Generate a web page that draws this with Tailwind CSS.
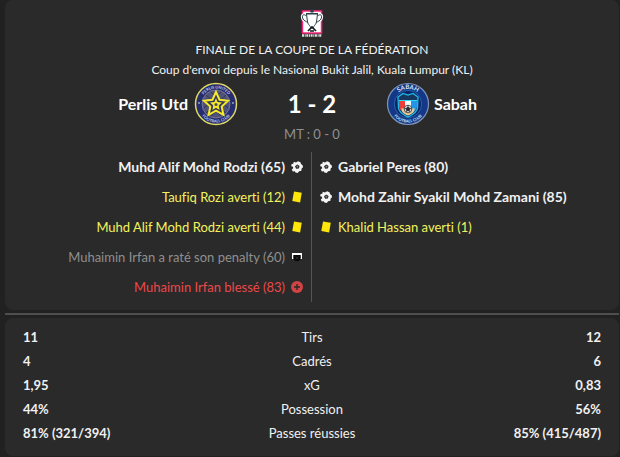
<!DOCTYPE html>
<html lang="fr">
<head>
  <meta charset="UTF-8" />
  <meta name="viewport" content="width=device-width, initial-scale=1.0" />
  <title>Perlis Utd 1 - 2 Sabah</title>
  <script src="https://cdn.jsdelivr.net/npm/@tailwindcss/browser@4"></script>
</head>
<body class="bg-[#212121] text-[#f1f1f1] font-['Lato','Open_Sans',sans-serif] [font-variant-ligatures:none] text-[13px] leading-5 pl-[5px] pr-px">
  <!-- shared icons -->
  <svg class="hidden" aria-hidden="true">
    <symbol id="ball" viewBox="0 0 12 12">
      <path d="M2.800.8 5 1.400 7 .3 9.500 1.200 10 3 11.800 4.500 11.900 6.500 10.600 7.500 10.400 9.700 8.200 10.300 6.600 11.900 4.500 11.500 3.800 10.200 1.800 10.400.8 8.500 2.200 7.300 2 5.800.2 5.300.6 3 2.300 2.700Z" fill="#f5f5f5" />
      <path d="M6.300 3.400 8.600 5 7.900 7.600 5.100 7.700 4 5.200Z" fill="#2a2a2a" />
      <circle cx="6.400" cy="5.600" r=".9" fill="#8a8a8a" />
    </symbol>
    <symbol id="card" viewBox="0 0 12 12">
      <path d="M3 .5 10.800 1.800 9.100 11.500 1.300 10.100Z" fill="#ffe60a" />
    </symbol>
    <symbol id="missed" viewBox="0 0 12 12">
      <path d="M1 2H11V8H9.500V4H2.500V8H1Z" fill="#fff" />
      <path d="M2.500 4H9.500V6.800A3.500 3.500 0 0 1 2.500 6.800Z" fill="#080808" />
      <path d="M4.500 5.400 7.500 8.400M7.500 5.400 4.500 8.400" stroke="#333" stroke-width=".7" />
    </symbol>
    <symbol id="injury" viewBox="0 0 12 12">
      <circle cx="6" cy="6" r="6" fill="#d04444" />
      <path d="M6 3V9M3 6H9" stroke="#2a2a2a" stroke-width="1.400" />
    </symbol>
  </svg>

  <main>
    <section class="bg-[#2a2a2a] rounded-lg py-2">
      <header class="flex flex-col items-center text-center text-xs leading-5">
        <svg class="w-6 h-8" viewBox="0 0 24 32" aria-label="Piala FAM">
          <rect x="2.500" y="3" width="19" height="22" fill="#fff" stroke="#f5267c" stroke-width="1.500" />
          <path d="M6.500 8C3 5 1.500 8 3 11C4 13 6 13 8 15M17.500 8C21 5 22.500 8 21 11C20 13 18 13 16 15" fill="none" stroke="#fff" stroke-width="3" />
          <path d="M6.500 8C3 5 1.500 8 3 11C4 13 6 13 8 15M17.500 8C21 5 22.500 8 21 11C20 13 18 13 16 15" fill="none" stroke="#263f4b" stroke-width="1" />
          <path d="M6.500 6H17.500L16.500 14C15 18 13.500 18 13 20H11C10.500 18 9 18 7.500 14Z" fill="#fff" stroke="#263f4b" />
          <path d="M6 5.500H18M10.500 4 12 1.500 13.500 4Z" fill="#263f4b" stroke="#263f4b" />
          <path d="M8 23 12 19 16 23M10 23H14" fill="none" stroke="#101820" stroke-width="1.600" />
          <path d="M2 27.500H22" stroke="#ddd" stroke-width="2.500" stroke-dasharray="2 .7 1 .6" />
        </svg>
        <p>FINALE DE LA COUPE DE LA FÉDÉRATION</p>
        <p>Coup d'envoi depuis le Nasional Bukit Jalil, Kuala Lumpur (KL)</p>
      </header>

      <div class="grid grid-cols-[1fr_148px_1fr] items-center mt-0.5">
        <div class="flex items-center justify-end gap-1.5">
          <h2 class="text-base font-bold text-white">Perlis Utd</h2>
          <svg class="w-11 h-11" viewBox="0 0 44 44" aria-hidden="true">
            <circle cx="22" cy="22" r="20.500" fill="#252d70" stroke="#ded763" stroke-width="1.500" />
            <circle cx="22" cy="22" r="14" fill="#505377" stroke="#8b8ba2" stroke-width=".7" />
            <path d="M12 13 32 31M10 18 27 34M17 10 34 26M32 13 12 31M27 10 10 26M34 18 17 34" stroke="#303454" stroke-width="1" />
            <path d="M22 10 25.500 17.700 34 18.700 27.700 24.500 29.400 32.800 22 28.600 14.600 32.800 16.300 24.500 10 18.700 18.500 17.700Z" fill="#34375a" stroke="#f4e92b" stroke-width="2" />
            <path d="M22 16 23.500 20 28 20.500 24.700 23.500 25.600 28 22 25.700 18.400 28 19.300 23.500 16 20.500 20.500 20Z" fill="#f4e92b" />
            <circle cx="22" cy="22.500" r="1.500" fill="#4b4d55" />
            <path id="perlisTop" d="M6.500 22A15.500 15.500 0 0 1 37.500 22" fill="none" />
            <path id="perlisBottom" d="M3.500 22A18.500 18.500 0 0 0 40.500 22" fill="none" />
            <g fill="#c9cbe4" font-size="4" font-weight="700" text-anchor="middle">
              <text><textPath href="#perlisTop" startOffset="50%">PERLIS UNITED</textPath></text>
              <text><textPath href="#perlisBottom" startOffset="50%">FOOTBALL CLUB</textPath></text>
            </g>
            <circle cx="5" cy="21" r=".8" fill="#eee" /><circle cx="39" cy="21" r=".8" fill="#eee" />
          </svg>
        </div>
        <p class="text-center text-2xl font-bold text-white">1 - 2</p>
        <div class="flex items-center gap-1">
          <svg class="w-11 h-11" viewBox="0 0 44 44" aria-hidden="true">
            <circle cx="22" cy="22" r="20.500" fill="#123887" stroke="#8095b9" stroke-width="1.200" />
            <circle cx="22" cy="22" r="13.700" fill="#092767" stroke="#2b63ae" />
            <path d="M12 15 17 11.500 22 13 27 11.500 32 15 31.500 26C31 31 26 33 22 35C18 33 13 31 12.500 26Z" fill="#16365f" stroke="#21bce5" stroke-width="1.300" />
            <path d="M13 19H19V31C15 29 13 27 13 24Z" fill="#ee3d38" />
            <path d="M19 19H25V32H19Z" fill="#f5f7f8" />
            <path d="M25 19H31V24C31 27 29 30 25 32Z" fill="#2196e6" />
            <path d="M13 18.500H31" fill="none" stroke="#30dced" stroke-width="1" />
            <path d="M15.500 26C17 27 27 27 28.500 26C29 30 26 32 22 33.500C18 32 15 30 15.500 26Z" fill="#ecc793" />
            <circle cx="22" cy="27" r="3.800" fill="#e8e8e5" stroke="#293038" stroke-width=".8" />
            <path d="M22 25 24 26.500 23.300 28.800H20.700L20 26.500ZM22 23.200V25.500M18.500 26.500H20M24 26.500H25.500M20 30 21 28.500M24 30 23 28.500" fill="#20242a" stroke="#20242a" stroke-width=".7" />
            <path id="sabahTop" d="M7 22A15 15 0 0 1 37 22" fill="none" />
            <path id="sabahBottom" d="M3.500 22A18.500 18.500 0 0 0 40.500 22" fill="none" />
            <g fill="#dce7f7" font-weight="700" text-anchor="middle">
              <text font-size="6"><textPath href="#sabahTop" startOffset="50%">SABAH</textPath></text>
              <text font-size="4"><textPath href="#sabahBottom" startOffset="50%">FOOTBALL CLUB</textPath></text>
            </g>
          </svg>
          <h2 class="text-base font-bold text-white">Sabah</h2>
        </div>
      </div>
      <p class="text-center text-[#8f8f8f] leading-4">MT : 0 - 0</p>

      <div class="grid grid-cols-2 leading-[30px] mt-2.5">
        <ul class="border-r border-[#555] pr-2">
          <li class="flex items-center justify-end gap-1.5 text-sm leading-[30px] font-bold">Muhd Alif Mohd Rodzi (65) <svg class="size-3"><use href="#ball" /></svg></li>
          <li class="flex items-center justify-end gap-1.5 text-[#f3f35e]">Taufiq Rozi averti (12) <svg class="size-3"><use href="#card" /></svg></li>
          <li class="flex items-center justify-end gap-1.5 text-[#f3f35e]">Muhd Alif Mohd Rodzi averti (44) <svg class="size-3"><use href="#card" /></svg></li>
          <li class="flex items-center justify-end gap-1.5 text-[#8f8f8f]">Muhaimin Irfan a raté son penalty (60) <svg class="size-3"><use href="#missed" /></svg></li>
          <li class="flex items-center justify-end gap-1.5 text-[#ed4848]">Muhaimin Irfan blessé (83) <svg class="size-3"><use href="#injury" /></svg></li>
        </ul>
        <ul class="pl-2">
          <li class="flex items-center gap-1.5 text-sm leading-[30px] font-bold"><svg class="size-3"><use href="#ball" /></svg> Gabriel Peres (80)</li>
          <li class="flex items-center gap-1.5 text-sm leading-[30px] font-bold"><svg class="size-3"><use href="#ball" /></svg> Mohd Zahir Syakil Mohd Zamani (85)</li>
          <li class="flex items-center gap-1.5 text-[#f3f35e]"><svg class="size-3"><use href="#card" /></svg> Khalid Hassan averti (1)</li>
        </ul>
      </div>
    </section>

    <hr class="border-t-2 border-[#4e4e4e] my-[3px]" />

    <section class="bg-[#2a2a2a] rounded-lg px-[18px] pt-[7px] pb-[11px]">
      <table class="w-full table-fixed leading-6">
        <tbody>
          <tr><td class="text-left font-bold">11</td><th scope="row" class="font-normal">Tirs</th><td class="text-right font-bold">12</td></tr>
          <tr><td class="text-left font-bold">4</td><th scope="row" class="font-normal">Cadrés</th><td class="text-right font-bold">6</td></tr>
          <tr><td class="text-left font-bold">1,95</td><th scope="row" class="font-normal">xG</th><td class="text-right font-bold">0,83</td></tr>
          <tr><td class="text-left font-bold">44%</td><th scope="row" class="font-normal">Possession</th><td class="text-right font-bold">56%</td></tr>
          <tr><td class="text-left font-bold">81% (321/394)</td><th scope="row" class="font-normal">Passes réussies</th><td class="text-right font-bold">85% (415/487)</td></tr>
        </tbody>
      </table>
    </section>
  </main>
</body>
</html>
